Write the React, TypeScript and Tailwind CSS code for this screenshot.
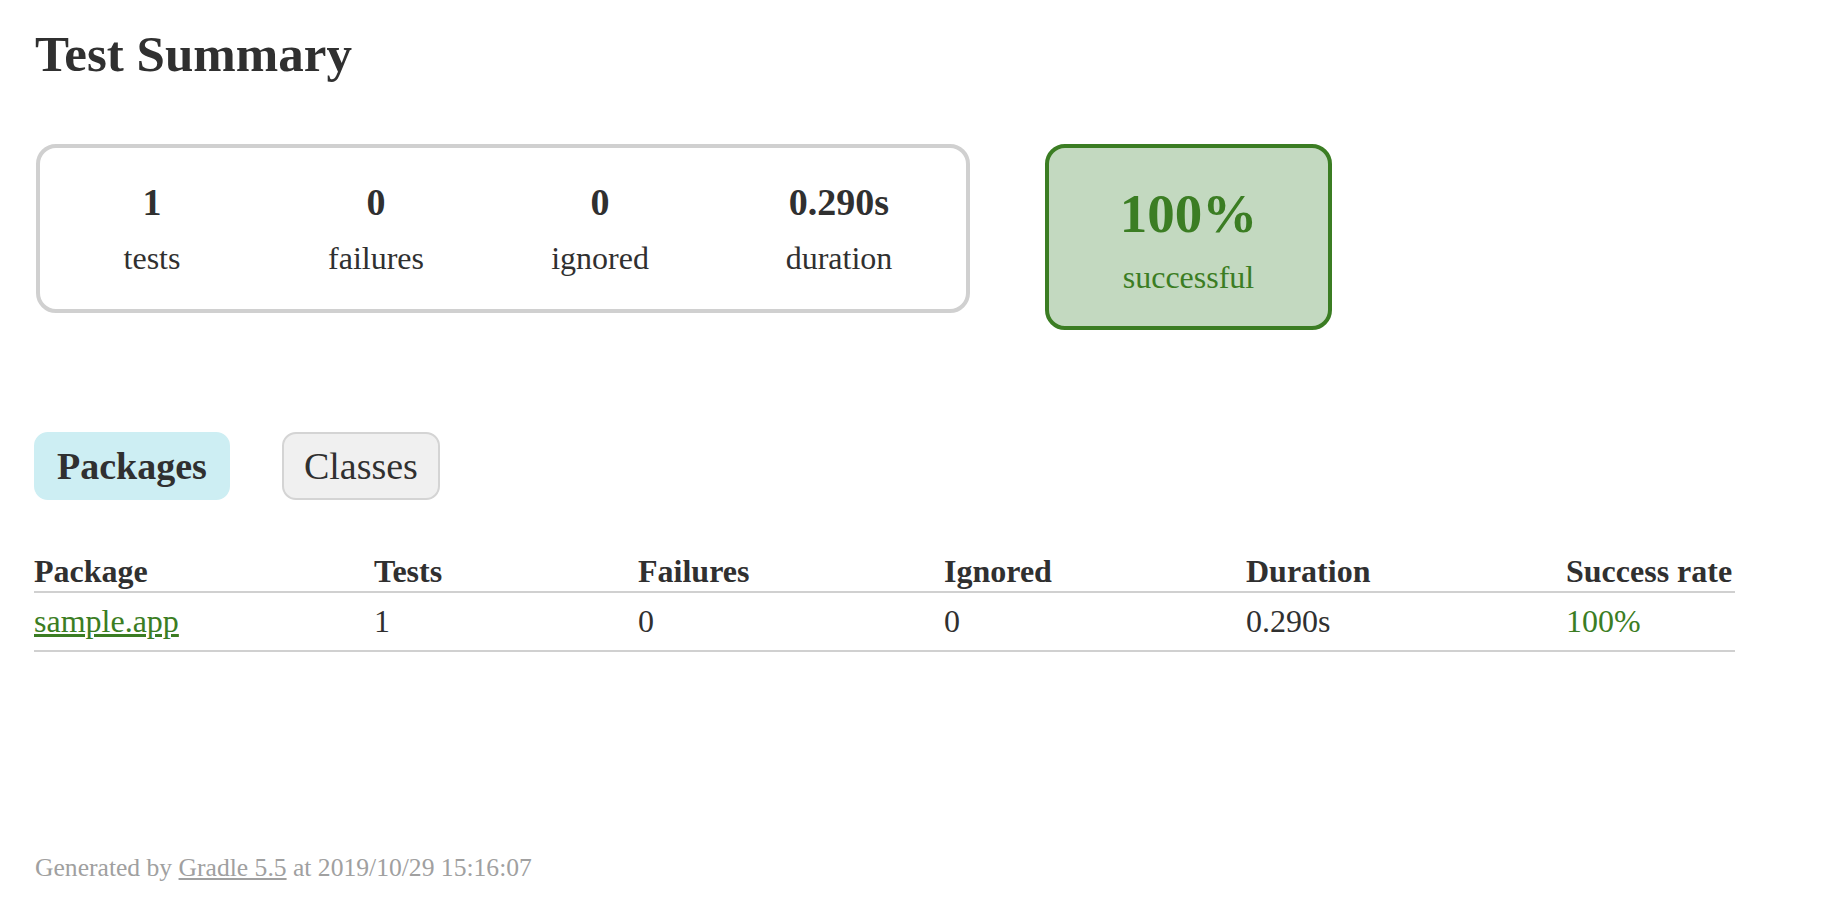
import React from 'react';

const stats = [
  { value: '1', label: 'tests', width: 'w-[224px]' },
  { value: '0', label: 'failures', width: 'w-[224px]' },
  { value: '0', label: 'ignored', width: 'w-[224px]' },
  { value: '0.290s', label: 'duration', width: 'w-[254px]' },
];

const columns = ['Package', 'Tests', 'Failures', 'Ignored', 'Duration', 'Success rate'];

const App: React.FC = () => {
  return (
    <div className="min-h-screen bg-white px-[34px] pt-[25px] font-['Liberation_Serif','Times_New_Roman',serif] text-[32px] text-[#303030]">
      <h1 className="whitespace-nowrap pl-px text-[51px] font-bold leading-[59px]">Test Summary</h1>

      {/* summary boxes */}
      <div className="mt-[60px] flex items-start">
        <div className="ml-[2px] flex rounded-[20px] border-4 border-[#d0d0d0]">
          {stats.map((s) => (
            <div key={s.label} className={`${s.width} pt-[32px] pb-[32px] text-center`}>
              <div className="mb-[16px] text-[38px] font-bold leading-[44px]">{s.value}</div>
              <div className="leading-[37px]">{s.label}</div>
            </div>
          ))}
        </div>
        <div className="ml-[75px] w-[287px] rounded-[20px] border-4 border-[#3b7d23] bg-[#c3d9c0] pt-[34px] pb-[30px] text-center text-[#3b7d23]">
          <div className="mb-[14px] text-[55px] font-bold leading-[63px]">100%</div>
          <div className="leading-[37px]">successful</div>
        </div>
      </div>

      {/* tabs */}
      <ul className="mt-[102px] flex gap-[52px]">
        <li className="rounded-[14px] border-2 border-[#cdeef3] bg-[#cdeef3] px-[21px] py-[10px] text-[38px] font-bold leading-[44px]">
          Packages
        </li>
        <li className="rounded-[14px] border-2 border-[#d4d4d4] bg-[#f0f0f0] px-[20px] py-[10px] text-[38px] leading-[44px]">
          Classes
        </li>
      </ul>

      {/* packages table */}
      <table className="mt-[50px] w-[1701px] table-fixed border-collapse">
        <colgroup>
          <col className="w-[148px]" />
          <col className="w-[264px]" />
          <col className="w-[306px]" />
          <col className="w-[302px]" />
          <col className="w-[320px]" />
          <col className="w-[361px]" />
        </colgroup>
        <thead>
          <tr>
            {columns.map((c, i) => (
              <th
                key={c}
                className={`whitespace-nowrap border-b-2 border-[#d0d0d0] pt-[3px] pb-[1px] text-left font-bold leading-[37px] ${i === 0 ? 'pl-0' : 'pl-[192px]'}`}
              >
                {c}
              </th>
            ))}
          </tr>
        </thead>
        <tbody>
          <tr className="border-b-2 border-[#d0d0d0]">
            <td className="whitespace-nowrap py-[10px] leading-[37px]">
              <a href="#" className="text-[#3b7d23] underline">sample.app</a>
            </td>
            <td className="whitespace-nowrap py-[10px] pl-[192px] leading-[37px]">1</td>
            <td className="whitespace-nowrap py-[10px] pl-[192px] leading-[37px]">0</td>
            <td className="whitespace-nowrap py-[10px] pl-[192px] leading-[37px]">0</td>
            <td className="whitespace-nowrap py-[10px] pl-[192px] leading-[37px]">0.290s</td>
            <td className="whitespace-nowrap py-[10px] pl-[192px] leading-[37px] text-[#3b7d23]">100%</td>
          </tr>
        </tbody>
      </table>

      {/* footer */}
      <div className="mt-[201px] whitespace-nowrap pl-px text-[25.6px] leading-[29px] text-[#a0a0a0]">
        Generated by <a href="#" className="text-[#a0a0a0] underline">Gradle 5.5</a> at 2019/10/29 15:16:07
      </div>
    </div>
  );
};

export default App;
